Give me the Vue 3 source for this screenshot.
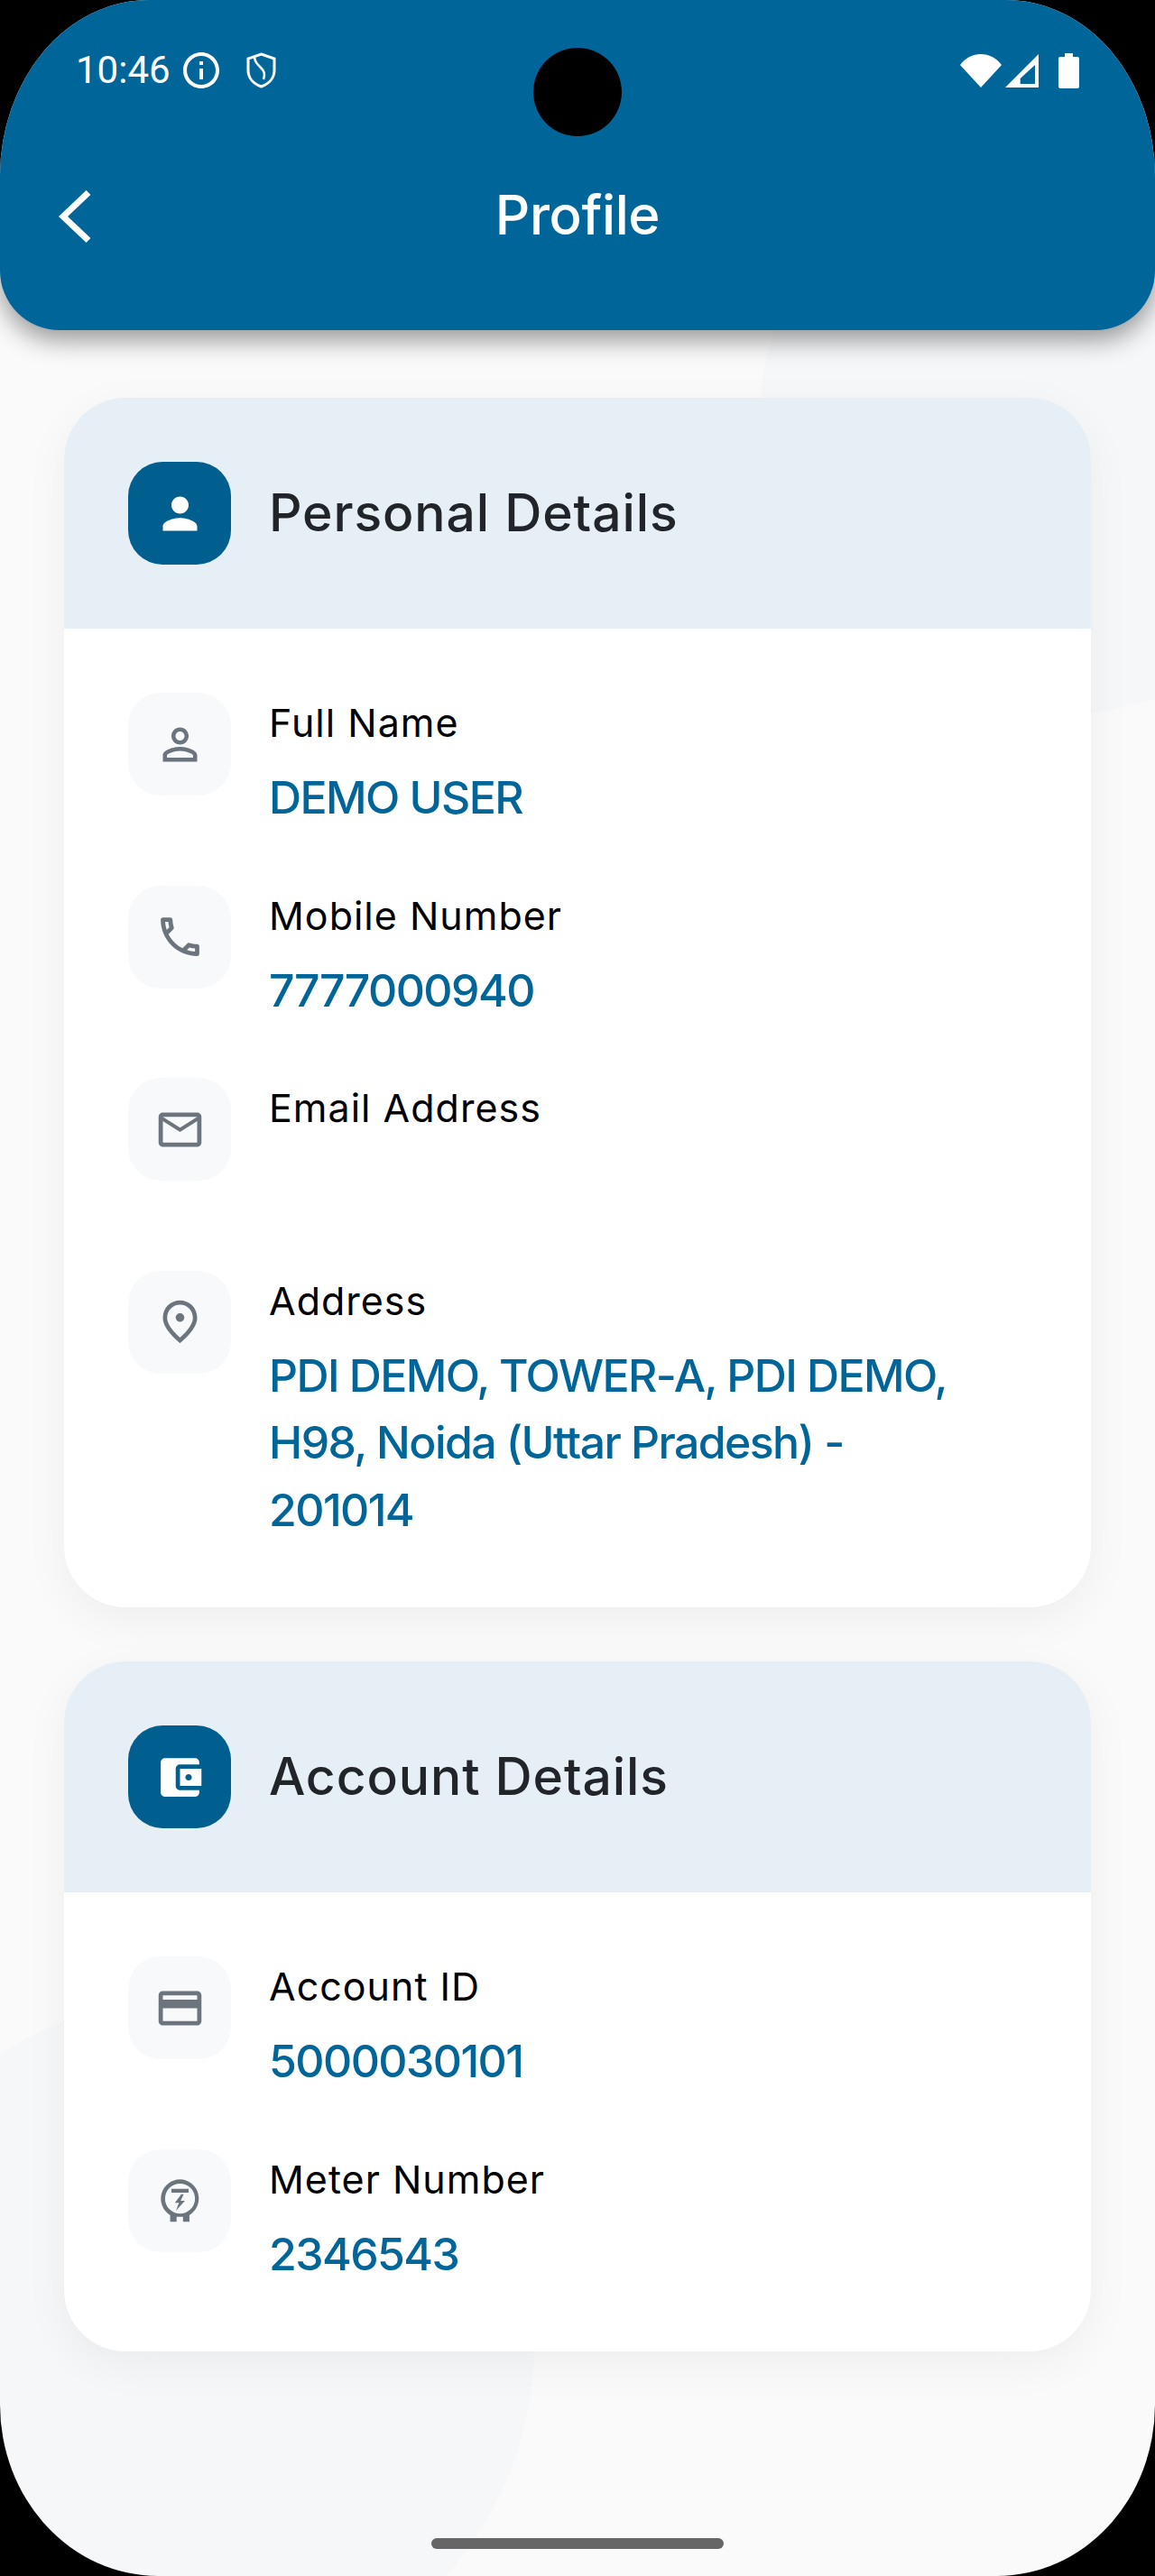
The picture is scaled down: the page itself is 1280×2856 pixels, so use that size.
<script setup>
const P = {
  person: 'M12 5.9c1.16 0 2.1.94 2.1 2.1s-.94 2.1-2.1 2.1S9.9 9.16 9.9 8s.94-2.1 2.1-2.1m0 9c2.97 0 6.1 1.46 6.1 2.1v1.1H5.9V17c0-.64 3.13-2.1 6.1-2.1M12 4C9.79 4 8 5.79 8 8s1.79 4 4 4 4-1.79 4-4-1.79-4-4-4zm0 9c-2.67 0-8 1.34-8 4v3h16v-3c0-2.66-5.33-4-8-4z',
  phone: 'M6.54 5c.06.89.21 1.76.45 2.59l-1.2 1.2c-.41-1.2-.67-2.47-.76-3.79h1.51m9.86 12.02c.85.24 1.72.39 2.6.45v1.49c-1.32-.09-2.59-.35-3.8-.75l1.2-1.19M7.5 3H4c-.55 0-1 .45-1 1 0 9.39 7.61 17 17 17 .55 0 1-.45 1-1v-3.49c0-.55-.45-1-1-1-1.24 0-2.45-.2-3.57-.57-.1-.04-.21-.05-.31-.05-.26 0-.51.1-.71.29l-2.2 2.2c-2.83-1.45-5.15-3.76-6.59-6.59l2.2-2.2c.28-.28.36-.67.25-1.02C8.7 6.45 8.5 5.25 8.5 4c0-.55-.45-1-1-1z',
  mail: 'M22 6c0-1.1-.9-2-2-2H4c-1.1 0-2 .9-2 2v12c0 1.1.9 2 2 2h16c1.1 0 2-.9 2-2V6zm-2 0l-8 5-8-5h16zm0 12H4V8l8 5 8-5v10z',
  place: 'M12 12c-1.1 0-2-.9-2-2s.9-2 2-2 2 .9 2 2-.9 2-2 2zm6-1.8C18 6.57 15.35 4 12 4s-6 2.57-6 6.2c0 2.34 1.95 5.44 6 9.14 4.05-3.7 6-6.8 6-9.14zM12 2c4.2 0 8 3.22 8 8.2 0 3.32-2.67 7.25-8 11.8-5.33-4.55-8-8.48-8-11.8C4 5.22 7.8 2 12 2z',
  card: 'M20 4H4c-1.11 0-1.99.89-1.99 2L2 18c0 1.11.89 2 2 2h16c1.11 0 2-.89 2-2V6c0-1.11-.89-2-2-2zm0 14H4v-6h16v6zm0-10H4V6h16v2z',
  meter: 'M12 2.200a9 9 0 0 0-4.600 16.700V22h3v-2.300h3V22h3v-3.100A9 9 0 0 0 12 2.200zm0 2a7 7 0 1 1 0 14 7 7 0 0 1 0-14zM8 6.600v1.800h8V6.600H8zm4.600 2.600-3 4h1.900l-1.400 3.600 4.200-4.600h-2l1.400-3h-1.100z'
}

const sections = [
  {
    title: 'Personal Details',
    headIcon: 'M12 12c2.21 0 4-1.79 4-4s-1.79-4-4-4-4 1.79-4 4 1.79 4 4 4zm0 2c-2.67 0-8 1.34-8 4v2h16v-2c0-2.66-5.33-4-8-4z',
    rows: [
      { icon: P.person, label: 'Full Name', value: 'DEMO USER' },
      { icon: P.phone, label: 'Mobile Number', value: '7777000940' },
      { icon: P.mail, label: 'Email Address', value: '' },
      { icon: P.place, label: 'Address', value: 'PDI DEMO, TOWER-A, PDI DEMO, H98, Noida (Uttar Pradesh) - 201014' }
    ]
  },
  {
    title: 'Account Details',
    headIcon: 'M21 18v1c0 1.1-.9 2-2 2H5c-1.11 0-2-.9-2-2V5c0-1.1.89-2 2-2h14c1.1 0 2 .9 2 2v1h-9c-1.11 0-2 .9-2 2v8c0 1.1.89 2 2 2h9zm-9-2h10V8H12v8zm4-2.500c-.83 0-1.500-.67-1.500-1.500s.67-1.500 1.500-1.500 1.500.67 1.500 1.500-.67 1.500-1.500 1.500z',
    rows: [
      { icon: P.card, label: 'Account ID', value: '5000030101' },
      { icon: P.meter, label: 'Meter Number', value: '2346543' }
    ]
  }
]
</script>

<template>
  <div class="screen">
    <div class="blob blob-top"></div>
    <div class="blob blob-bottom"></div>

    <header class="appbar">
      <div class="status">
        <span class="time">10:46</span>
        <svg class="st-info" viewBox="0 0 24 24" fill="#fff"><path d="M11 7h2v2h-2zm0 4h2v6h-2zm1-9C6.48 2 2 6.48 2 12s4.48 10 10 10 10-4.48 10-10S17.52 2 12 2zm0 18c-4.41 0-8-3.59-8-8s3.59-8 8-8 8 3.59 8 8-3.59 8-8 8z"/></svg>
        <svg class="st-shield" viewBox="0 0 33 40" fill="none" stroke="#fff" stroke-width="3"><path d="M16.500 2 31 7v13c0 8.500-6 15-14.500 18C8 35 2 28.500 2 20V7z"/><path d="M9 6c1 5 3 7 7 11 4 4 5 7 3 13" stroke-width="2.600"/></svg>
        <span class="spacer"></span>
        <svg class="st-wifi" viewBox="0 0 46 37" fill="#fff"><path d="M0 12C6 4 14 0 23 0s17 4 23 12L23 37z"/></svg>
        <svg class="st-signal" viewBox="0 0 37 37" fill="#fff" fill-rule="evenodd"><path d="M37 0v37H0zM33 12 16.700 27v6H33z"/></svg>
        <svg class="st-battery" viewBox="0 0 23 39" fill="#fff"><path d="M7 0h9v4h5a2 2 0 0 1 2 2v31a2 2 0 0 1-2 2H2a2 2 0 0 1-2-2V6a2 2 0 0 1 2-2h5z"/></svg>
      </div>
      <div class="toolbar">
        <svg class="back" viewBox="0 0 36 58" fill="none" stroke="#fff" stroke-width="7"><path d="M33 2.500 5 29l28 26.500"/></svg>
        <h1 class="page-title">Profile</h1>
      </div>
      <div class="camera"></div>
    </header>

    <main class="content">
      <section v-for="s in sections" :key="s.title" class="card">
        <div class="card-head">
          <div class="head-icon">
            <svg viewBox="0 0 24 24" fill="#fff"><path :d="s.headIcon" /></svg>
          </div>
          <h2 class="card-title">{{ s.title }}</h2>
        </div>
        <div class="card-body">
          <div v-for="r in s.rows" :key="r.label" class="row">
            <div class="row-icon">
              <svg viewBox="0 0 24 24" fill="#6c757d"><path :d="r.icon" /></svg>
            </div>
            <div class="row-text">
              <div class="label">{{ r.label }}</div>
              <div class="value">{{ r.value }}</div>
            </div>
          </div>
        </div>
      </section>
    </main>

    <div class="home-bar"></div>
  </div>
</template>

<style scoped>
.screen {
  position: relative;
  width: 1280px;
  height: 2856px;
  overflow: hidden;
  background: #fafafa;
  border-radius: 165px 165px 175px 175px / 195px 195px 190px 190px;
  font-family: Inter, "Noto Sans", sans-serif;
}
.blob {
  position: absolute;
  border-radius: 50%;
  background: rgba(0, 70, 160, 0.016);
}
.blob-top { left: 842px; top: 137px; width: 656px; height: 656px; }
.blob-bottom { left: -176px; top: 2216px; width: 768px; height: 768px; }

.appbar {
  position: relative;
  height: 366px;
  background: #006699;
  border-radius: 0 0 66px 66px;
  box-shadow: 0 11px 28px rgba(0, 0, 0, 0.4);
}
.status {
  display: flex;
  align-items: center;
  height: 40px;
  padding: 58px 84px 0 84px;
  color: #fff;
}
.time {
  font-family: Roboto, sans-serif;
  font-size: 42px;
  line-height: 40px;
  width: 115px;
}
.st-info { width: 48px; height: 48px; }
.st-shield { width: 33px; height: 40px; margin-left: 26px; }
.spacer { flex: 1; }
.st-wifi { width: 46px; height: 37px; }
.st-signal { width: 37px; height: 37px; margin-left: 4px; }
.st-battery { width: 23px; height: 39px; margin-left: 22px; }

.toolbar {
  position: relative;
  display: flex;
  align-items: center;
  justify-content: center;
  height: 80px;
  margin-top: 100px;
}
.back {
  position: absolute;
  left: 65px;
  top: 13px;
  width: 36px;
  height: 58px;
}
.page-title {
  margin: 0;
  font-size: 60px;
  line-height: 80px;
  font-weight: 550;
  letter-spacing: -0.4px;
  color: #fff;
}
.camera {
  position: absolute;
  left: 591px;
  top: 53px;
  width: 98px;
  height: 98px;
  border-radius: 50%;
  background: #000;
}

.content {
  position: relative;
  display: flex;
  flex-direction: column;
  gap: 60px;
  padding: 75px 71px 0;
}
.card {
  background: #fff;
  border-radius: 68px;
  overflow: hidden;
  box-shadow: 0 14px 50px rgba(0, 0, 0, 0.05);
}
.card-head {
  display: flex;
  align-items: center;
  gap: 42px;
  height: 256px;
  padding: 0 71px;
  background: #e6eff5;
}
.head-icon {
  display: flex;
  align-items: center;
  justify-content: center;
  width: 114px;
  height: 114px;
  border-radius: 38px;
  background: #015f90;
}
.head-icon svg { width: 57px; height: 57px; }
.card-title {
  margin: 0;
  font-size: 57px;
  line-height: 80px;
  font-weight: 550;
  letter-spacing: 0.9px;
  color: #212529;
}
.card-body {
  display: flex;
  flex-direction: column;
  gap: 60px;
  padding: 71px;
}
.row {
  display: flex;
  gap: 42px;
}
.row-icon {
  flex: none;
  display: flex;
  align-items: center;
  justify-content: center;
  width: 114px;
  height: 114px;
  border-radius: 36px;
  background: #f8f9fa;
}
.row-icon svg { width: 57px; height: 57px; }
.row-text { flex: 1; padding-top: 1px; min-width: 0; }
.label {
  font-size: 43px;
  line-height: 64px;
  letter-spacing: 1px;
  color: #000;
}
.value {
  max-width: 790px;
  min-height: 74.5px;
  margin-top: 14px;
  font-size: 50px;
  line-height: 74.5px;
  font-weight: 550;
  letter-spacing: -1.6px;
  color: #006699;
}
.home-bar {
  position: absolute;
  left: 478px;
  top: 2814px;
  width: 324px;
  height: 12px;
  border-radius: 6px;
  background: #666;
}
</style>

<style>
html, body { background: #000; }
</style>
